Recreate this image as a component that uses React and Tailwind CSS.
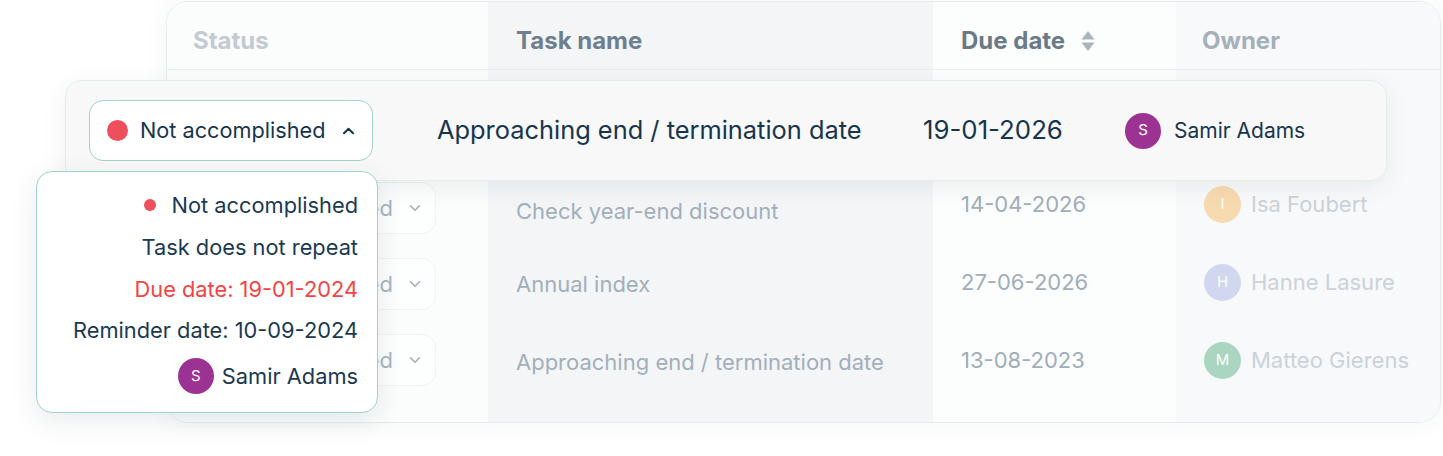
import React from "react";

const font = { fontFamily: "Inter, 'Noto Sans', sans-serif" };

function ChevronDown({ className }) {
  return (
    <svg viewBox="0 0 12 8" className={className} fill="none" stroke="currentColor" strokeWidth="1.6" strokeLinecap="round" strokeLinejoin="round">
      <path d="M1.5 1.8 6 6.2l4.5-4.4" />
    </svg>
  );
}

function ChevronUp({ className }) {
  return (
    <svg viewBox="0 0 12 8" className={className} fill="none" stroke="currentColor" strokeWidth="2" strokeLinecap="round" strokeLinejoin="round">
      <path d="M1.5 6.2 6 1.8l4.5 4.4" />
    </svg>
  );
}

function SortIcon() {
  return (
    <svg viewBox="0 0 16 22" className="w-[16px] h-[22px] text-[#a9b4be]" fill="currentColor">
      <path d="M8 1 14.5 9.5h-13z" />
      <path d="M8 21 1.5 12.5h13z" />
    </svg>
  );
}

function BgPill() {
  return (
    <div className="flex h-[52px] w-[240px] items-center justify-end gap-[16px] rounded-[14px] border border-[#eef3f3] bg-[#fdfefe] pr-[14px]">
      <span className="whitespace-nowrap text-[22px] text-[#a9b5c1]">Not accomplished</span>
      <ChevronDown className="w-[12px] h-[8px] text-[#a3afbb]" />
    </div>
  );
}

function Avatar({ letter, bg, size = "w-[37px] h-[37px]", text = "text-[15px]" }) {
  return (
    <div className={`${size} ${bg} rounded-full flex items-center justify-center text-white ${text} shrink-0`}>
      {letter}
    </div>
  );
}

export default function App() {
  const rows = [
    { task: "Check year-end discount", date: "14-04-2026", owner: "Isa Foubert", letter: "I", bg: "bg-[#f8dab0]", taskShift: "pt-[10px]" },
    { task: "Annual index", date: "27-06-2026", owner: "Hanne Lasure", letter: "H", bg: "bg-[#d1d7ef]", taskShift: "" },
    { task: "Approaching end / termination date", date: "13-08-2023", owner: "Matteo Gierens", letter: "M", bg: "bg-[#aad6c1]", taskShift: "" },
  ];

  return (
    <div className="relative w-[1443px] h-[456px] overflow-hidden bg-white" style={font}>
      {/* Background table */}
      <div className="pl-[166px] pt-[1px]">
        <div className="flex h-[422px] w-[1275px] overflow-hidden rounded-[22px] border border-[#e4eeee] shadow-[0_0_24px_rgba(30,60,70,0.06)]">
          {/* Status column */}
          <div className="flex w-[321px] flex-col bg-[#fbfcfc]">
            <div className="flex h-[68px] items-center border-b border-[#e6eded] pl-[26px] pt-[10px] text-[24px] font-bold text-[#c3cad1]">Status</div>
            <div className="h-[112px] shrink-0" />
            <div className="flex flex-col gap-[24px] pl-[29px]">
              <BgPill />
              <BgPill />
              <BgPill />
            </div>
          </div>
          {/* Task column */}
          <div className="flex w-[445px] flex-col bg-[#f3f5f7]">
            <div className="flex h-[68px] items-center border-b border-[#e6eded] pl-[28px] pt-[10px] text-[24px] font-bold text-[#6e7f8e]">Task name</div>
            <div className="h-[97px] shrink-0" />
            {rows.map((r) => (
              <div key={r.task} className={`flex h-[78px] items-center whitespace-nowrap pl-[28px] text-[22px] text-[#a2afbb] ${r.taskShift}`}>{r.task}</div>
            ))}
          </div>
          {/* Due column */}
          <div className="flex w-[243px] flex-col bg-[#fcfdfd]">
            <div className="flex h-[68px] items-center gap-[15px] border-b border-[#e6eded] pl-[28px] pt-[10px] text-[24px] font-bold text-[#6a7a89]">
              Due date
              <SortIcon />
            </div>
            <div className="h-[95px] shrink-0" />
            {rows.map((r) => (
              <div key={r.date} className="flex h-[78px] items-center pl-[28px] text-[22px] text-[#a1aeba]">{r.date}</div>
            ))}
          </div>
          {/* Owner column */}
          <div className="flex flex-1 flex-col bg-[#f8f9fa]">
            <div className="flex h-[68px] items-center border-b border-[#e6eded] pl-[26px] pt-[10px] text-[24px] font-bold text-[#a5b0ba]">Owner</div>
            <div className="h-[95px] shrink-0" />
            {rows.map((r) => (
              <div key={r.owner} className="flex h-[78px] items-center gap-[10px] pl-[28px] text-[22px] text-[#cbd2d9]">
                <Avatar letter={r.letter} bg={r.bg} />
                <span>{r.owner}</span>
              </div>
            ))}
          </div>
        </div>
      </div>

      {/* Highlighted row */}
      <div className="absolute left-[65px] top-[80px] flex h-[101px] w-[1322px] items-center rounded-[16px] border border-[#e2eeec] bg-[#f8f8f8] pl-[23px] shadow-[0_6px_24px_rgba(30,60,70,0.08)]">
        <div className="flex h-[61px] w-[284px] shrink-0 items-center rounded-[14px] border-[1.5px] border-[#a1d2cc] bg-white pl-[17px]">
          <span className="h-[21px] w-[21px] shrink-0 rounded-full bg-[#ee4f5d]" />
          <span className="ml-[12px] whitespace-nowrap text-[21.7px] text-[#17354d]">Not accomplished</span>
          <ChevronUp className="ml-[17px] h-[8px] w-[13px] text-[#17354d]" />
        </div>
        <span className="ml-[64px] w-[486px] shrink-0 whitespace-nowrap text-[25.4px] text-[#17354d]">Approaching end / termination date</span>
        <span className="w-[202px] shrink-0 text-[25.8px] text-[#17354d]">19-01-2026</span>
        <Avatar letter="S" bg="bg-[#9c3393]" size="w-[36px] h-[36px]" />
        <span className="ml-[13px] text-[21px] text-[#17354d]">Samir Adams</span>
      </div>

      {/* Popover */}
      <div className="absolute left-[36px] top-[171px] flex h-[242px] w-[342px] flex-col items-end rounded-[16px] border-[1.5px] border-[#a1d2cc] bg-white pr-[19px] pt-[18px] text-[21.8px] text-[#1b3a52] shadow-[0_8px_28px_rgba(30,60,70,0.10)]">
        <div className="flex h-[30px] items-center gap-[16px]">
          <span className="h-[12px] w-[12px] rounded-full bg-[#ee4f5d]" />
          <span>Not accomplished</span>
        </div>
        <div className="mt-[12px] flex h-[30px] items-center">Task does not repeat</div>
        <div className="mt-[12px] flex h-[30px] items-center text-[#f24444]">Due date: 19-01-2024</div>
        <div className="mt-[11px] flex h-[30px] items-center">Reminder date: 10-09-2024</div>
        <div className="mt-[12px] flex h-[38px] items-center gap-[8px]">
          <Avatar letter="S" bg="bg-[#9c3393]" size="w-[36px] h-[36px]" />
          <span>Samir Adams</span>
        </div>
      </div>
    </div>
  );
}
